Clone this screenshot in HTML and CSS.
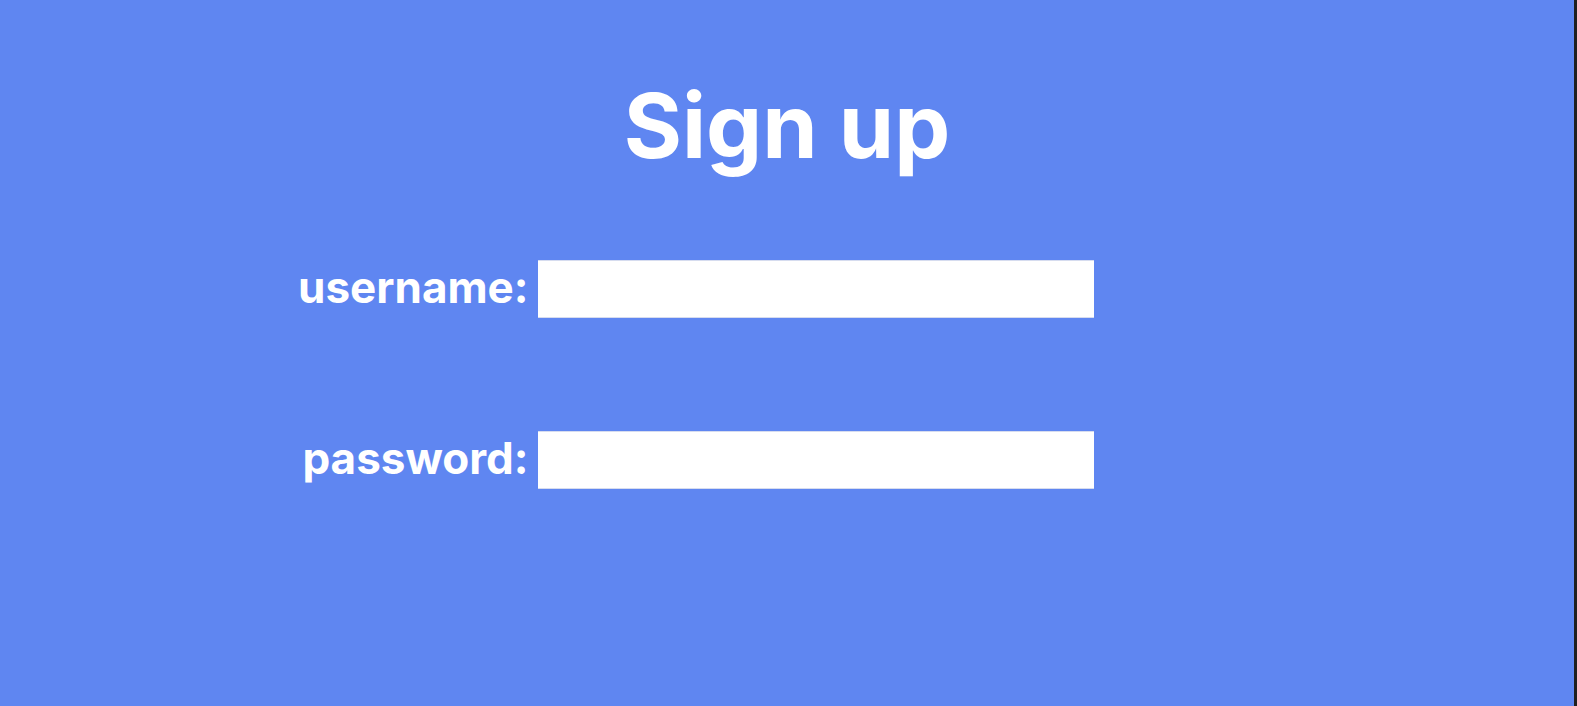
FILE: index.html
```html
<!DOCTYPE html>
<html lang="en">
<head>
<meta charset="utf-8">
<title>Sign up</title>
<link rel="stylesheet" href="styles.css">
</head>
<body>
<div class="page">
  <h1 class="title">Sign up</h1>
  <form class="form">
    <label class="label" for="username">username:</label>
    <input class="field" id="username" type="text">
    <label class="label" for="password">password:</label>
    <input class="field" id="password" type="password">
  </form>
</div>
</body>
</html>
```
FILE: styles.css
```css
html, body {
  margin: 0;
  padding: 0;
  height: 100%;
}
body {
  background: #5f86f1;
  font-family: Inter, "Noto Sans", sans-serif;
  color: #ffffff;
}
.page {
  box-sizing: border-box;
  min-height: 100vh;
  border-right: 3px solid #1f1f1f;
  padding-top: 81px;
}
.title {
  margin: 0;
  font-size: 89px;
  line-height: 1;
  font-weight: 700;
  text-align: center;
}
.form {
  margin: 90px 0 0 298px;
  display: grid;
  grid-template-columns: auto 556px;
  column-gap: 10px;
  row-gap: 113px;
  align-items: center;
  justify-content: start;
}
.label {
  font-size: 44px;
  font-weight: 700;
  text-align: right;
  position: relative;
  top: -2px;
}
.field {
  box-sizing: border-box;
  height: 58px;
  margin: 0;
  padding: 0 8px;
  border: none;
  border-top: 1px solid #d6dcef;
  border-bottom: 1px solid #d6dcef;
  background: #ffffff;
  font-size: 20px;
  outline: none;
}
```
